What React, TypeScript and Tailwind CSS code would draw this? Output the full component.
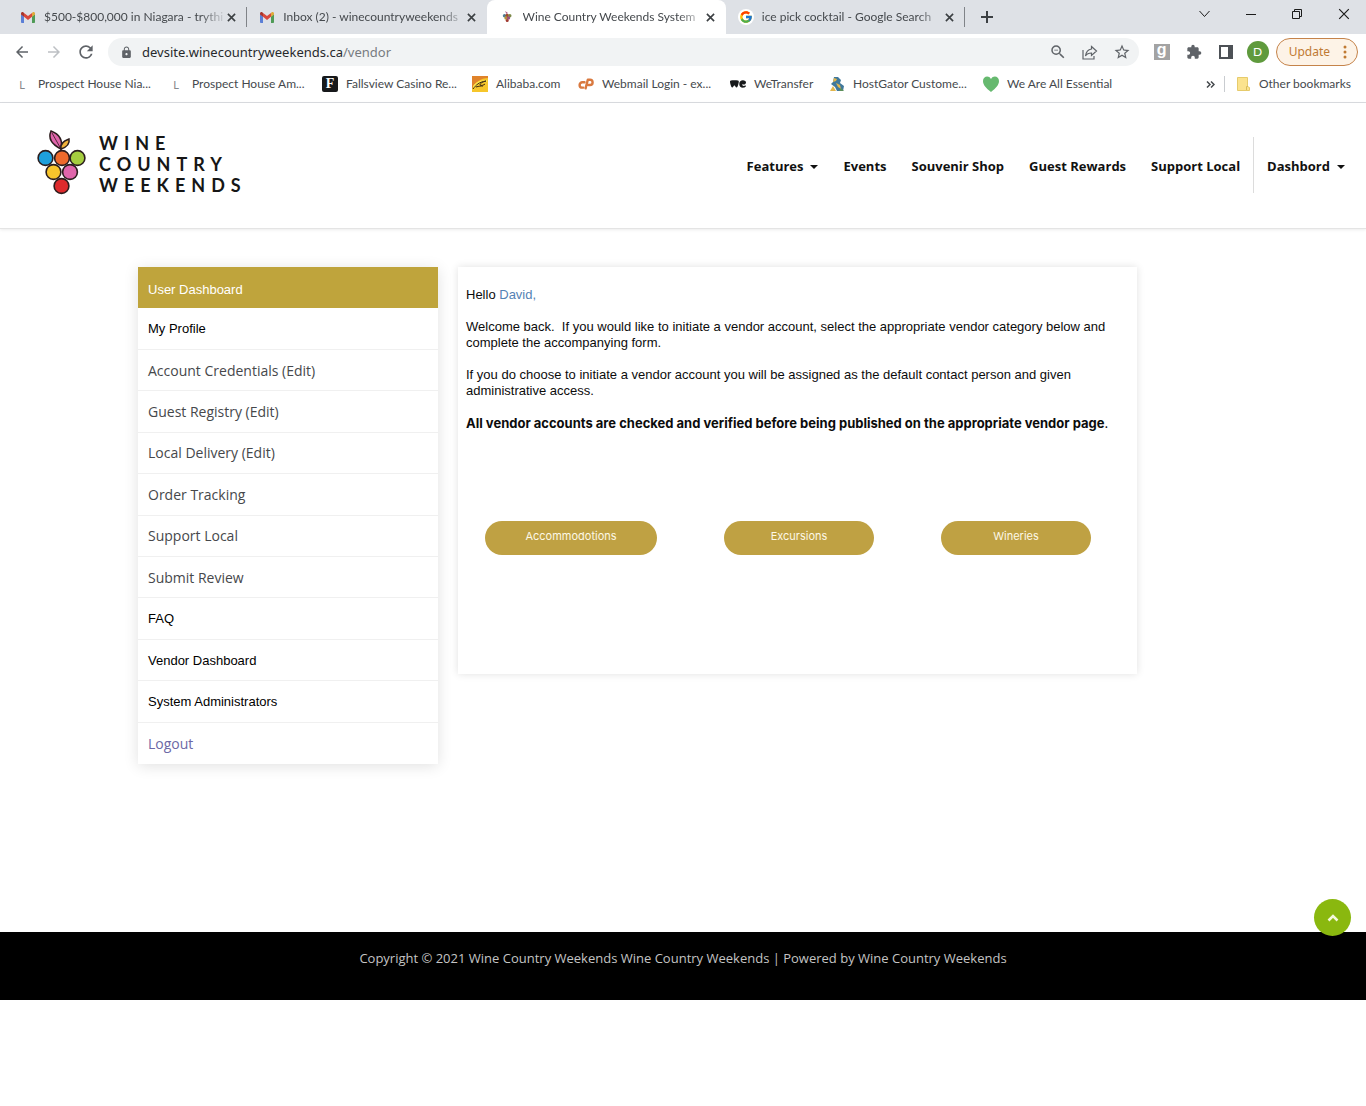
import type { ReactNode } from "react";
import { FcGoogle } from "react-icons/fc";
import { SiWetransfer } from "react-icons/si";
import {
  MdArrowBack,
  MdArrowForward,
  MdExtension,
  MdLock,
  MdOutlineStarBorder,
  MdOutlineZoomOut,
  MdRefresh,
} from "react-icons/md";

function GmailIcon() {
  return (
    <svg viewBox="0 0 14 11" className="h-[11px] w-[14px]" aria-hidden="true">
      <path d="M0 2v8.2c0 .5.4.8.8.8H3V4.5z" fill="#5b7fd6" />
      <path d="M14 2v8.2c0 .5-.4.8-.8.8H11V4.5z" fill="#4f9b57" />
      <path d="M11 1v3.8l3-2.3V1.4C14 0 12.500-.4 11.500.4z" fill="#e0a93a" />
      <path d="M0 1.400v1.100l3 2.300V1L2.500.4C1.500-.4 0 0 0 1.400z" fill="#a8352c" />
      <path d="M3 4.800V1l4 3 4-3v3.800L7 7.900z" fill="#d9483b" />
    </svg>
  );
}

function GrapeFavicon() {
  return (
    <svg viewBox="0 0 14 14" className="size-[14px]" aria-hidden="true">
      <path d="M6.500 4 5 1l3 2z" fill="#b05a86" />
      <circle cx="4.500" cy="5.800" r="1.700" fill="#4d7f96" />
      <circle cx="7.200" cy="5.500" r="1.800" fill="#a34a2c" />
      <circle cx="9.800" cy="5.800" r="1.700" fill="#7d8a4a" />
      <circle cx="6" cy="8" r="1.700" fill="#b5913a" />
      <circle cx="8.500" cy="8" r="1.700" fill="#9a527c" />
      <circle cx="7.200" cy="10.600" r="1.500" fill="#a03a30" />
    </svg>
  );
}

function GoogleFavicon() {
  return (
    <span className="flex size-4 items-center justify-center rounded-full bg-white">
      <FcGoogle className="size-[14px]" />
    </span>
  );
}

function CloseIcon({ className }: { className: string }) {
  return (
    <svg viewBox="0 0 10 10" className={className} fill="none" stroke="currentColor" aria-hidden="true">
      <path d="M1 1l8 8M9 1L1 9" />
    </svg>
  );
}

type TabProps = { icon: ReactNode; title: string; active?: boolean; divider?: boolean };

function Tab({ icon, title, active, divider }: TabProps) {
  return (
    <div
      className={
        active
          ? "relative flex h-full min-w-0 flex-1 items-center rounded-t-lg bg-white pl-3 pr-[11px]"
          : "relative flex h-full min-w-0 flex-1 items-center pl-3 pr-[11px]"
      }
    >
      <span className="flex w-4 shrink-0 justify-center">{icon}</span>
      <button
        type="button"
        className="ml-2 min-w-0 flex-1 overflow-hidden whitespace-nowrap text-left text-xs text-[#45494d] [mask-image:linear-gradient(to_right,black_85%,transparent)]"
      >
        {title}
      </button>
      <button type="button" aria-label="Close tab" className="shrink-0 text-[#3c4043]">
        <CloseIcon className="size-[9px] stroke-[1.8]" />
      </button>
      {divider && <span className="absolute right-0 top-[7px] h-5 w-px bg-[#808388]" />}
    </div>
  );
}

function TabStrip() {
  return (
    <div className="flex h-[34px] items-center bg-[#dee1e6] pl-2">
      <div className="flex h-full w-[957px] min-w-0">
        <Tab icon={<GmailIcon />} title="$500-$800,000 in Niagara - trythi" divider />
        <Tab icon={<GmailIcon />} title="Inbox (2) - winecountryweekends" />
        <Tab icon={<GrapeFavicon />} title="Wine Country Weekends System" active />
        <Tab icon={<GoogleFavicon />} title="ice pick cocktail - Google Search" divider />
      </div>
      <button type="button" aria-label="New tab" className="ml-4 text-[#3c4043]">
        <svg viewBox="0 0 12 12" className="size-3 stroke-2" fill="none" stroke="currentColor">
          <path d="M6 0v12M0 6h12" />
        </svg>
      </button>
      <div className="ml-auto flex items-center gap-9 pb-[6px] pr-4 text-[#1b1b1b]">
        <button type="button" aria-label="Search tabs">
          <svg viewBox="0 0 11 8" className="h-2 w-[11px]" fill="none" stroke="currentColor">
            <path d="M.5 1l5 5.500 5-5.500" />
          </svg>
        </button>
        <button type="button" aria-label="Minimize" className="h-px w-[10px] bg-[#1b1b1b]" />
        <button type="button" aria-label="Restore">
          <svg viewBox="0 0 10 10" className="size-[10px]" fill="none" stroke="currentColor">
            <path d="M.5 2.500h7v7h-7zM2.500 2.500v-2h7v7h-2" />
          </svg>
        </button>
        <button type="button" aria-label="Close">
          <CloseIcon className="size-3 stroke-1" />
        </button>
      </div>
    </div>
  );
}

function Toolbar() {
  return (
    <div className="flex h-9 items-center bg-white pl-[13px] pr-2 text-[#5f6368]">
      <button type="button" aria-label="Back">
        <MdArrowBack className="size-[18px]" />
      </button>
      <button type="button" aria-label="Forward" className="ml-[14px] text-[#bdc0c4]">
        <MdArrowForward className="size-[18px]" />
      </button>
      <button type="button" aria-label="Reload" className="ml-[13px]">
        <MdRefresh className="size-5" />
      </button>
      <div className="relative ml-3 flex h-7 flex-1 items-center rounded-full bg-[#f1f3f4] px-3">
        <MdLock className="size-[13px]" />
        <a
          href="https://devsite.winecountryweekends.ca/vendor"
          className="ml-[9px] font-['Noto_Sans'] text-[13px] leading-5 text-[#27292c]"
        >
          devsite.winecountryweekends.ca<span className="text-[#777b80]">/vendor</span>
        </a>
        <div className="ml-auto flex items-center gap-[15px]">
          <button type="button" aria-label="Zoom">
            <MdOutlineZoomOut className="size-[18px]" />
          </button>
          <button type="button" aria-label="Share">
            <svg viewBox="0 0 16 15" className="h-[15px] w-4" fill="none" stroke="currentColor" strokeWidth="1.200">
              <path d="M1 5v9h11v-3M9.500 1.500l5 4.500-5 4.500V8C7 8 5 8.500 3.500 11 4 7 6 4.500 9.500 4z" />
            </svg>
          </button>
          <button type="button" aria-label="Bookmark this tab" className="-mr-1">
            <MdOutlineStarBorder className="size-[18px]" />
          </button>
        </div>
      </div>
      <button
        type="button"
        className="ml-[15px] flex size-4 items-center justify-center bg-[#a3a3a3] pb-1 font-['Liberation_Sans'] text-base font-bold leading-4 text-white"
      >
        g
      </button>
      <button type="button" aria-label="Extensions" className="ml-4">
        <MdExtension className="size-4" />
      </button>
      <button type="button" aria-label="Side panel" className="ml-[17px] text-[#4d5156]">
        <svg viewBox="0 0 14 14" className="size-[14px]">
          <path d="M0 0h14v14H0zM2 2v10h7V2z" fill="currentColor" fillRule="evenodd" />
        </svg>
      </button>
      <button
        type="button"
        className="ml-[14px] flex size-[22px] items-center justify-center rounded-full bg-[#5f9a3d] text-xs text-white"
      >
        D
      </button>
      <button
        type="button"
        className="ml-[7px] flex h-7 items-center rounded-full border border-[#c5834a] bg-[#fdf3e7] pl-3 pr-[10px] font-['Noto_Sans'] text-xs text-[#c07a33]"
      >
        Update
        <svg viewBox="0 0 4 14" className="ml-[13px] h-[14px] w-1" fill="currentColor" aria-hidden="true">
          <circle cx="2" cy="2" r="1.500" />
          <circle cx="2" cy="7" r="1.500" />
          <circle cx="2" cy="12" r="1.500" />
        </svg>
      </button>
    </div>
  );
}

function AlibabaIcon() {
  return (
    <svg viewBox="0 0 16 16" className="size-4" aria-hidden="true">
      <path d="M0 0h16v16H0z" fill="#f6c62b" />
      <path d="M0 0h16v2C9 2 3 6 0 13z" fill="#e0832a" />
      <path d="M1 10c3-4 7-6 14-6v2C9 6 4 9 1 14z" fill="#fbe24a" />
      <path d="M1 13c3-4 6-7 13-8-3 1-6 2-6 4 1 1 4 0 5-1M4 11c3-1 5-1 7-1" fill="none" stroke="#3c2a10" />
    </svg>
  );
}

function CpanelIcon() {
  return (
    <svg
      viewBox="0 0 16 12"
      className="h-3 w-4"
      fill="none"
      stroke="#d9793f"
      strokeWidth="2.400"
      strokeLinecap="round"
      strokeLinejoin="round"
      aria-hidden="true"
    >
      <path d="M6.500 4.200H4.300a2.600 2.600 0 0 0 0 5.400H5.200" />
      <path d="M7.600 10.400L9.800 1.800h2.200a2.500 2.500 0 0 1 0 5.200h-1.400" />
    </svg>
  );
}

function HostGatorIcon() {
  return (
    <svg viewBox="0 0 16 16" className="size-4" aria-hidden="true">
      <path d="M5 1l4 0 3 3-1 3 4 3-1 5H8L6 11 2 8l2-2z" fill="#3f789c" />
      <path d="M5 2l3 1-1 2-3 1zM7 7l4 2 1 4-3-2zM1 15l3-5 3 5z" fill="#e2b64c" />
      <path d="M10 15l2-3 3 3z" fill="#5c8f5a" />
    </svg>
  );
}

function Letter() {
  return <span className="w-4 text-center text-[11px] leading-none text-[#85888c]">L</span>;
}

const bookmarks: { label: string; icon: ReactNode; width: string }[] = [
  { label: "Prospect House Nia...", icon: <Letter />, width: "w-[154px]" },
  { label: "Prospect House Am...", icon: <Letter />, width: "w-[154px]" },
  {
    label: "Fallsview Casino Re...",
    width: "w-[150px]",
    icon: (
      <span className="flex size-4 items-center justify-center rounded-xs bg-[#17191b] font-['Liberation_Serif'] text-sm font-bold leading-none text-white">
        F
      </span>
    ),
  },
  { label: "Alibaba.com", icon: <AlibabaIcon />, width: "w-[106px]" },
  { label: "Webmail Login - ex...", icon: <CpanelIcon />, width: "w-[152px]" },
  { label: "WeTransfer", icon: <SiWetransfer className="size-4 text-[#17191b]" />, width: "w-[99px]" },
  { label: "HostGator Custome...", icon: <HostGatorIcon />, width: "w-[154px]" },
  {
    label: "We Are All Essential",
    width: "w-[136px]",
    icon: (
      <svg viewBox="0 0 16 16" className="size-4" aria-hidden="true">
        <path d="M8 16C3 12 0 9 0 5c0-5 6-6 8-2 2-4 8-3 8 2 0 4-3 7-8 11z" fill="#66b96f" />
      </svg>
    ),
  },
];

function BookmarksBar() {
  return (
    <nav
      aria-label="Bookmarks"
      className="flex h-[33px] items-center border-b border-[#dadce0] bg-white pb-1 pl-[14px] pr-[15px] text-xs text-[#45494d]"
    >
      {bookmarks.map((b) => (
        <a key={b.label} href="#" className={`flex shrink-0 items-center gap-2 whitespace-nowrap ${b.width}`}>
          <span className="flex w-4 shrink-0 justify-center">{b.icon}</span>
          {b.label}
        </a>
      ))}
      <button type="button" aria-label="More bookmarks" className="ml-auto">
        <svg viewBox="0 0 9 7" className="h-[7px] w-[9px] stroke-[1.5]" fill="none" stroke="currentColor">
          <path d="M1 .5l3 3-3 3M5 .5l3 3-3 3" />
        </svg>
      </button>
      <span className="ml-[9px] h-4 w-px bg-[#c9ccd0]" />
      <a href="#" className="ml-3 flex items-center gap-[9px] whitespace-nowrap">
        <svg viewBox="0 0 13 14" className="h-[14px] w-[13px]" aria-hidden="true">
          <path d="M.5.5h10v9l2 1v3H.5z" fill="#fbe38e" stroke="#e6cb6c" />
          <path d="M9.500 13V9.500h1.500" fill="none" stroke="#d9bd5a" />
        </svg>
        Other bookmarks
      </a>
    </nav>
  );
}

const grapes = [
  { x: 8.5, y: 28, fill: "#1ea0dc" },
  { x: 25, y: 28, fill: "#ee6a2c" },
  { x: 40.5, y: 28, fill: "#a5cd3f" },
  { x: 16.5, y: 42, fill: "#f7c52c" },
  { x: 33, y: 42, fill: "#e065ab" },
  { x: 24.5, y: 56, fill: "#dd2a2c" },
];

function Logo() {
  return (
    <a href="#" aria-label="Wine Country Weekends" className="flex items-center gap-3">
      <svg viewBox="0 0 50 65" className="h-[65px] w-[50px]" aria-hidden="true" stroke="#2b1d1d">
        <path d="M24 19C14 14 11 8 14 1c8 3 12 9 10 18z" fill="#e065ab" strokeWidth="1.500" />
        <path d="M24 19c-1-5 2-8 8-10 1 5-2 8-8 10z" fill="#f0b23a" strokeWidth="1.500" />
        <path d="M15 3l9 16v4" fill="none" strokeWidth=".8" />
        {grapes.map((g) => (
          <circle key={g.fill} cx={g.x} cy={g.y} r="7.400" fill={g.fill} strokeWidth="1.600" />
        ))}
      </svg>
      <span className="flex flex-col pt-1 font-['Lato'] text-lg font-bold leading-[21px] tracking-[6px] text-[#161616]">
        <span>WINE</span>
        <span>COUNTRY</span>
        <span>WEEKENDS</span>
      </span>
    </a>
  );
}

function Caret() {
  return (
    <svg viewBox="0 0 8 4" className="ml-[7px] h-1 w-2" fill="currentColor" aria-hidden="true">
      <path d="M0 0h8L4 4z" />
    </svg>
  );
}

function SiteHeader() {
  const item = "flex items-center px-3 pt-[3px] whitespace-nowrap";
  return (
    <header className="flex items-start justify-between border-b border-[#e4e4e4] bg-white pb-8 pl-[37px] pr-[9px] pt-[26px] shadow-[0_1px_3px_rgba(0,0,0,0.08)]">
      <Logo />
      <nav className="mt-2 flex h-14 items-center gap-px font-['Open_Sans'] text-[13px] font-bold text-[#111111]">
        <button type="button" className={item}>
          Features
          <Caret />
        </button>
        <a href="#" className={item}>Events</a>
        <a href="#" className={item}>Souvenir Shop</a>
        <a href="#" className={item}>Guest Rewards</a>
        <a href="#" className={item}>Support Local</a>
        <span className="h-14 w-px bg-[#dcdcdc]" />
        <button type="button" className={item}>
          Dashbord
          <Caret />
        </button>
      </nav>
    </header>
  );
}

const plain = "text-[13px] font-['Liberation_Sans'] text-black";
const soft = "text-sm font-['Open_Sans'] text-[#46484b]";

const menu: { label: string; style: string }[] = [
  { label: "My Profile", style: plain },
  { label: "Account Credentials (Edit)", style: soft },
  { label: "Guest Registry (Edit)", style: soft },
  { label: "Local Delivery (Edit)", style: soft },
  { label: "Order Tracking", style: soft },
  { label: "Support Local", style: soft },
  { label: "Submit Review", style: soft },
  { label: "FAQ", style: plain },
  { label: "Vendor Dashboard", style: plain },
  { label: "System Administrators", style: plain },
  { label: "Logout", style: "text-sm font-['Open_Sans'] text-[#6c68a6]" },
];

function Sidebar() {
  return (
    <nav
      aria-label="User Dashboard"
      className="grid min-h-[497px] w-[300px] shrink-0 auto-rows-fr bg-white shadow-[0_2px_14px_rgba(0,0,0,0.12)]"
    >
      <a href="#" className="flex items-center bg-[#bfa43c] px-[10px] pt-1 font-['Liberation_Sans'] text-[13px] text-white">
        User Dashboard
      </a>
      {menu.map((m) => (
        <a
          key={m.label}
          href="#"
          className={`flex items-center border-b border-[#f0f0f0] px-[10px] pt-px last:border-b-0 ${m.style}`}
        >
          {m.label}
        </a>
      ))}
    </nav>
  );
}

function VendorPanel() {
  const pill =
    "flex h-[34px] items-center justify-center rounded-full bg-[#bfa143] pb-1 font-['Inter'] text-[11px] text-[#fdf8e6]";
  return (
    <section className="min-w-0 flex-1 bg-white px-2 pb-[119px] pt-5 font-['Liberation_Sans'] text-[13px] leading-4 text-[#0c0c0c] shadow-[0_0_8px_rgba(0,0,0,0.12)]">
      <p>
        Hello <span className="text-[#5482b4]">David,</span>
      </p>
      <p className="mt-4">
        Welcome back.&nbsp; If you would like to initiate a vendor account, select the appropriate vendor category below
        and complete the accompanying form.
      </p>
      <p className="mt-4">
        If you do choose to initiate a vendor account you will be assigned as the default contact person and given
        administrative access.
      </p>
      <p className="mt-4 font-['Inter']">
        <strong className="font-bold">
          All vendor accounts are checked and verified before being published on the appropriate vendor page
        </strong>
        .
      </p>
      <div className="mt-[90px] flex flex-wrap gap-[67px] pl-[19px]">
        <button type="button" className={`w-[172px] ${pill}`}>Accommodotions</button>
        <button type="button" className={`w-[150px] ${pill}`}>Excursions</button>
        <button type="button" className={`w-[150px] ${pill}`}>Wineries</button>
      </div>
    </section>
  );
}

function SiteFooter() {
  return (
    <footer className="relative bg-black pb-8 pt-4 text-center font-['Open_Sans'] text-[13px] leading-5 text-[#c4c4c4]">
      <p>Copyright © 2021 Wine Country Weekends Wine Country Weekends | Powered by Wine Country Weekends</p>
      <button
        type="button"
        aria-label="Back to top"
        className="absolute -top-[33px] right-[15px] flex size-[37px] items-center justify-center rounded-full bg-[#8ab80f] text-[#f4f8dc]"
      >
        <svg viewBox="0 0 12 8" className="h-2 w-3 stroke-[2.5]" fill="none" stroke="currentColor">
          <path d="M1.500 6.500L6 2l4.500 4.500" />
        </svg>
      </button>
    </footer>
  );
}

export default function App() {
  return (
    <div className="min-h-screen bg-white font-['Lato',sans-serif]">
      <TabStrip />
      <Toolbar />
      <BookmarksBar />
      <SiteHeader />
      <main className="flex items-start gap-5 pb-[168px] pl-[138px] pr-[229px] pt-[38px]">
        <Sidebar />
        <VendorPanel />
      </main>
      <SiteFooter />
    </div>
  );
}
